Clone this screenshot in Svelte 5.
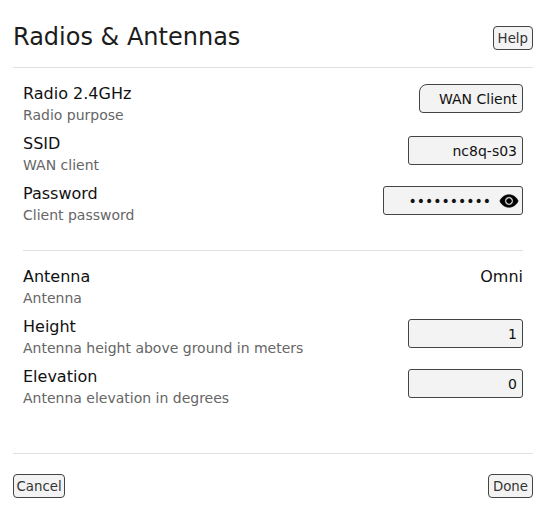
<script>
  let purpose = $state("wan");
  let ssid = $state("nc8q-s03");
  let password = $state("abcdefghij");
  let height = $state(1);
  let elevation = $state(0);
</script>

<div class="dialog">
  <header class="head">
    <h1>Radios &amp; Antennas</h1>
    <button class="btn">Help</button>
  </header>

  <section class="body">
    <div class="group">
      <div class="row">
        <div class="info">
          <strong>Radio 2.4GHz</strong>
          <span>Radio purpose</span>
        </div>
        <select class="field select" bind:value={purpose}>
          <option value="wan">WAN Client</option>
        </select>
      </div>
      <div class="row">
        <div class="info">
          <strong>SSID</strong>
          <span>WAN client</span>
        </div>
        <input class="field" type="text" bind:value={ssid} />
      </div>
      <div class="row">
        <div class="info">
          <strong>Password</strong>
          <span>Client password</span>
        </div>
        <div class="field pass">
          <input type="password" bind:value={password} />
          <svg viewBox="0 0 24 24" aria-hidden="true">
            <path d="M12 4.5C7 4.5 2.73 7.61 1 12c1.73 4.39 6 7.5 11 7.5s9.27-3.11 11-7.5c-1.73-4.39-6-7.5-11-7.5zM12 17c-2.76 0-5-2.24-5-5s2.24-5 5-5 5 2.24 5 5-2.24 5-5 5zm0-8c-1.66 0-3 1.34-3 3s1.34 3 3 3 3-1.34 3-3-1.34-3-3-3z" />
          </svg>
        </div>
      </div>
    </div>

    <div class="group second">
      <div class="row">
        <div class="info">
          <strong>Antenna</strong>
          <span>Antenna</span>
        </div>
        <div class="value">Omni</div>
      </div>
      <div class="row">
        <div class="info">
          <strong>Height</strong>
          <span>Antenna height above ground in meters</span>
        </div>
        <input class="field" type="text" bind:value={height} />
      </div>
      <div class="row">
        <div class="info">
          <strong>Elevation</strong>
          <span>Antenna elevation in degrees</span>
        </div>
        <input class="field" type="text" bind:value={elevation} />
      </div>
    </div>
  </section>

  <footer class="foot">
    <button class="btn cancel">Cancel</button>
    <button class="btn">Done</button>
  </footer>
</div>

<style>
  :global(body) { background: #fff; }

  .dialog {
    width: 520px;
    height: 530px;
    padding: 0 17px 0 13px;
    font-family: "DejaVu Sans", sans-serif;
    color: #000;
    display: flex;
    flex-direction: column;
  }

  .head {
    height: 67px;
    flex-shrink: 0;
    display: flex;
    justify-content: space-between;
    align-items: flex-start;
    border-bottom: 1px solid #e0e0e0;
  }
  h1 {
    margin: 23px 0 0;
    font-size: 24px;
    line-height: 29px;
    font-weight: 400;
    color: #1c1c1c;
  }
  .head .btn { margin-top: 26px; }

  .body {
    flex: 1;
    padding: 0 10px;
  }
  .group {
    padding-top: 16px;
    display: flex;
    flex-direction: column;
    height: 183px;
    box-sizing: border-box;
    border-bottom: 1px solid #e0e0e0;
  }
  .group.second {
    border-bottom: none;
  }

  .row {
    height: 50px;
    display: flex;
    justify-content: space-between;
    align-items: flex-start;
  }
  .info { display: flex; flex-direction: column; }
  .info strong {
    font-size: 16px;
    line-height: 20px;
    font-weight: 400;
    color: #111;
  }
  .info span {
    margin-top: 1px;
    font-size: 14px;
    line-height: 20px;
    color: #666;
  }
  .value { font-size: 16px; line-height: 20px; color: #111; }

  .field {
    box-sizing: border-box;
    width: 115px;
    height: 29px;
    margin-top: 2px;
    padding: 0 5px;
    background: #f3f3f3;
    border: 1px solid #444;
    border-radius: 3px;
    font: 14px "DejaVu Sans", sans-serif;
    color: #111;
    text-align: right;
    outline: none;
  }
  .select {
    width: 104px;
    margin-top: 0;
    appearance: none;
    border-radius: 8px 4px 4px 4px;
    direction: rtl;
  }
  .pass {
    width: 140px;
    display: flex;
    align-items: center;
    padding: 0 3px 0 0;
  }
  .pass input {
    flex: 1;
    min-width: 0;
    border: none;
    background: none;
    outline: none;
    padding: 0;
    font: inherit;
    text-align: right;
    color: inherit;
  }
  .pass svg {
    width: 20px;
    height: 20px;
    flex-shrink: 0;
    margin-left: 8px;
    fill: #000;
    stroke: #000;
    stroke-width: 0.7;
  }

  .foot {
    height: 77px;
    flex-shrink: 0;
    box-sizing: border-box;
    display: flex;
    justify-content: space-between;
    align-items: flex-start;
    border-top: 1px solid #e0e0e0;
  }
  .foot .btn { margin-top: 20px; }

  .btn {
    box-sizing: border-box;
    height: 24px;
    padding: 0 4px;
    background: #f3f3f3;
    border: 1px solid #444;
    border-radius: 4px;
    font: 13.33px "DejaVu Sans", sans-serif;
    color: #333;
  }
  .btn.cancel { padding: 0 2.5px; }
</style>
